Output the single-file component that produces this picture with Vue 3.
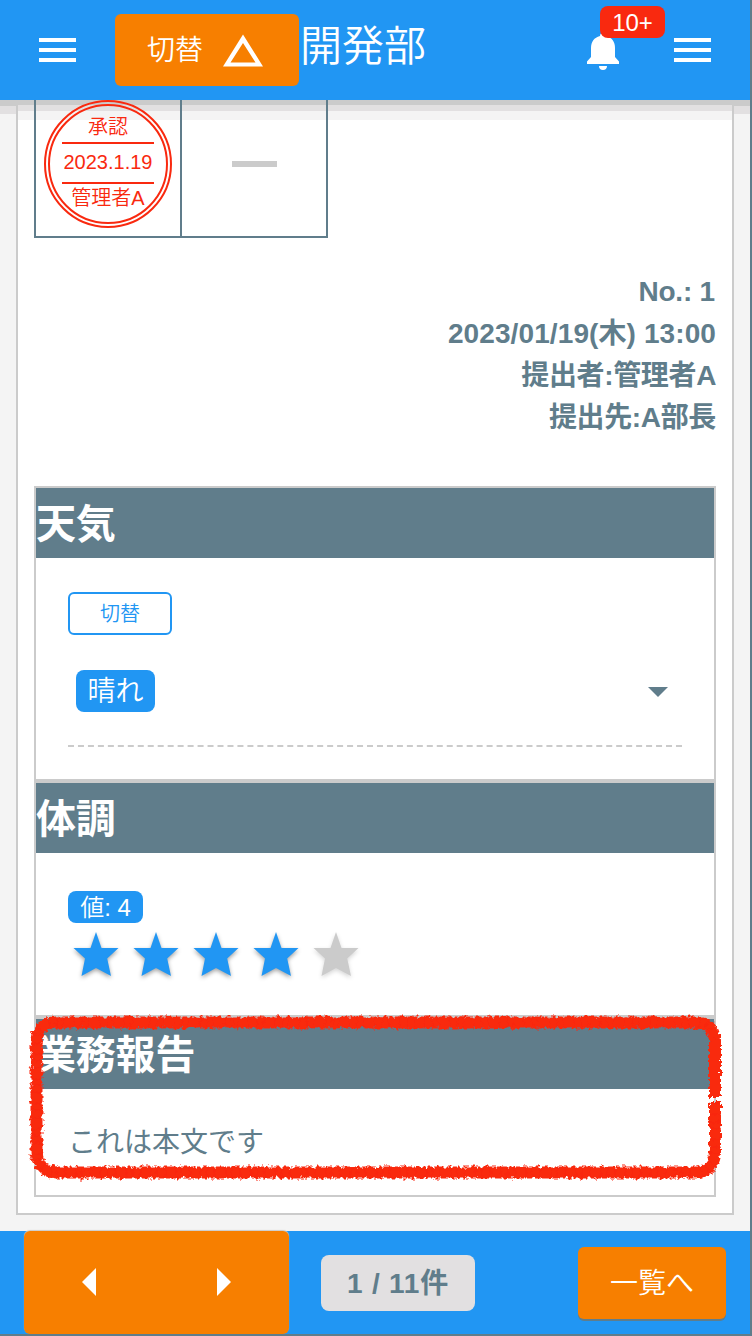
<script setup>
const lines = [
  { text: 'No.: 1', kind: 'number' },
  { text: '2023/01/19(木) 13:00', kind: 'date' },
  { text: '提出者:管理者A', kind: 'person' },
  { text: '提出先:A部長', kind: 'person' },
]
const stars = [true, true, true, true, false]
</script>

<template>
  <div class="page">
    <header class="topbar">
      <button class="menu"><i></i><i></i><i></i></button>
      <button class="switch">
        <span>切替</span>
        <svg width="40" height="33" viewBox="0 0 40 33"><path fill="#fff" fill-rule="evenodd" d="M20 0.500L40 32.500H0ZM20 9L7.500 28.500H32.500Z" /></svg>
      </button>
      <h1>開発部</h1>
      <div class="bell">
        <svg width="32" height="38" viewBox="0 0 32 38"><path fill="#fff" d="M16 0c-2 0-3 1-3 3C7 4.500 4 9 4 15v9L0 28.500V31h32v-2.500L28 24v-9C28 9 25 4.500 19 3c0-2-1-3-3-3ZM12 33h8c0 2.500-1.500 4-4 4s-4-1.500-4-4Z" /></svg>
        <span class="badge">10+</span>
      </div>
      <button class="menu"><i></i><i></i><i></i></button>
    </header>

    <main>
      <article class="card">
        <div class="approvals">
          <div class="cell">
            <div class="stamp">
              <div class="stamp-inner">
                <span class="state">承認</span>
                <span class="date">2023.1.19</span>
                <span class="who">管理者A</span>
              </div>
            </div>
          </div>
          <div class="cell"><b class="dash"></b></div>
        </div>

        <div class="meta">
          <p v-for="line in lines" :key="line.text" :class="line.kind">{{ line.text }}</p>
        </div>

        <section class="weather">
          <h2>天気</h2>
          <div class="content">
            <button class="outline">切替</button>
            <div class="select">
              <span class="chip">晴れ</span>
              <svg width="20" height="10" viewBox="0 0 20 10"><path d="M0 0H20L10 10Z" fill="#607d8b" /></svg>
            </div>
            <svg class="rule" width="614" height="2"><path d="M0 1H614" stroke="#cbcbcb" stroke-width="2" stroke-dasharray="6 3.967" /></svg>
          </div>
        </section>

        <section class="condition">
          <h2>体調</h2>
          <div class="content">
            <span class="value">値: 4</span>
            <div class="stars">
              <svg v-for="(on, i) in stars" :key="i" :class="{ on }" width="60" height="60" viewBox="0 0 60 60">
                <path d="M28 6L33.500 22H50.500L39.200 32.500L43 50L28 42L13.500 50L17 32.500L5.500 22H22.500Z" />
              </svg>
            </div>
          </div>
        </section>

        <section class="report">
          <h2>業務報告</h2>
          <div class="content"><p>これは本文です</p></div>
          <svg class="brush" width="716" height="190" viewBox="0 0 716 190">
            <defs>
              <filter id="chalk" x="0" y="0" width="716" height="190" filterUnits="userSpaceOnUse">
                <feTurbulence type="fractalNoise" baseFrequency="0.25" numOctaves="2" seed="8" result="noise" />
                <feDisplacementMap in="SourceGraphic" in2="noise" scale="7" xChannelSelector="R" yChannelSelector="G" />
              </filter>
            </defs>
            <g fill="none" stroke="#f9290f" filter="url(#chalk)">
              <path stroke-width="10" d="M699 98V43.500Q699 23.500 678 23.500H41.500Q20.500 23.500 20.500 43.500V151Q21 173.500 41.500 173.500H678Q699 173.500 699 152V103" />
              <path stroke-width="12" stroke-dasharray="7 1 10 1 5 1" d="M699 98V43.500Q699 23.500 678 23.500H41.500Q20.500 23.500 20.500 43.500V151Q21 173.500 41.500 173.500H678Q699 173.500 699 152V103" />
            </g>
          </svg>
        </section>
      </article>
    </main>

    <footer>
      <div class="pager">
        <button><svg width="14" height="28" viewBox="0 0 14 28"><path d="M14 0V28L0 14Z" fill="#fff" /></svg></button>
        <button><svg width="14" height="28" viewBox="0 0 14 28"><path d="M0 0L14 14L0 28Z" fill="#fff" /></svg></button>
      </div>
      <div class="count">1 / 11件</div>
      <button class="list">一覧へ</button>
    </footer>
  </div>
</template>

<style>
body { margin: 0; }
</style>

<style scoped>
* { box-sizing: border-box; }
.page {
  width: 752px; height: 1336px; overflow: hidden;
  display: flex; flex-direction: column;
  border-right: 2px solid #607d8b; border-bottom: 2px solid #607d8b;
  background: #f4f4f4; color: #607d8b;
  font-family: "Liberation Sans", "Noto Sans CJK JP", sans-serif;
  font-size: 28px;
}
button { border: 0; padding: 0; background: none; color: inherit; font: inherit; }
h1, h2, p { margin: 0; }
svg { display: block; }

.topbar { height: 100px; flex: none; display: flex; align-items: center; background: #2196f3; color: #fff; }
.menu { width: 37px; height: 24px; margin-left: 39px; display: flex; flex-direction: column; justify-content: space-between; }
.menu i { height: 4px; background: #fff; }
.switch {
  width: 184px; height: 72px; margin-left: 39px; padding: 0 36px 0 32px; border-radius: 6px;
  background: #f77f00; display: flex; align-items: center; justify-content: space-between;
  font-weight: 350;
}
.switch span { margin-top: -4px; }
h1 { width: 126px; margin: -7px 0 0 1px; font-size: 42px; line-height: 60px; font-weight: 350; white-space: nowrap; }
.bell { position: relative; width: 32px; height: 38px; margin-left: 161px; margin-top: 4px; }
.badge {
  position: absolute; left: 13px; top: -27px; width: 65px; height: 32px; border-radius: 8px;
  background: #f9290f; font-size: 24px; line-height: 34px; text-align: center;
}
.bell + .menu { margin-left: 55px; }

main {
  height: 1131px; flex: none; padding: 0 16px 16px;
  background: linear-gradient(#cbcbcb 0 6px, #e2e0e1 6px 14px, #f4f4f4 14px);
}
.card {
  height: 1115px; border: 2px solid #cbcbcb; border-top: 0; padding: 0 16px;
  background: linear-gradient(#cbcbcb 0 5px, #e2e0e1 5px 11px, #f4f4f4 11px 20px, #fff 20px);
}
.approvals { display: flex; width: 294px; height: 138px; border: 2px solid #607d8b; border-top: 0; }
.cell { flex: 1; display: flex; align-items: center; justify-content: center; }
.cell + .cell { border-left: 2px solid #607d8b; padding-bottom: 8px; }
.dash { width: 45px; height: 6px; background: #cbcbcb; }
.stamp { width: 128px; height: 128px; margin: -8px 0 0; padding: 2px; border: 2px solid #f9290f; border-radius: 50%; }
.stamp-inner {
  height: 100%; padding: 7px 12px 0; border: 2px solid #f9290f; border-radius: 50%;
  display: flex; flex-direction: column; align-items: center;
  color: #f9290f; font-size: 20px; line-height: 28px;
}
.stamp-inner span { white-space: nowrap; font-weight: 350; }
.stamp-inner .state { height: 30px; }
.stamp-inner .date { width: 92px; height: 42px; margin-top: -1px; border: solid #f9290f; border-width: 2px 0; line-height: 37px; display: flex; justify-content: center; }

.meta { margin: 33px 0 47px; text-align: right; font-weight: 700; line-height: 42px; }
.meta p { height: 42px; }
.meta .number { letter-spacing: -.2px; padding-right: 1px; }
.meta .date { letter-spacing: .1px; }
.meta .person { letter-spacing: -.35px; }

section { border: 2px solid #cbcbcb; background: #fff; }
h2 { height: 70px; background: #607d8b; color: #fff; font-size: 40px; line-height: 72px; font-weight: 700; letter-spacing: -.2px; }
.content { padding: 0 32px; }
.weather { height: 295px; }
.outline {
  display: block; width: 104px; height: 43px; margin-top: 34px; border: 2px solid #2196f3; border-radius: 6px;
  color: #2196f3; font-size: 20px; line-height: 40px; font-weight: 350;
}
.select { display: flex; align-items: center; justify-content: space-between; height: 42px; margin: 35px 14px 33px 8px; }
.select svg { margin-top: 2px; }
.chip { width: 79px; height: 42px; border-radius: 8px; background: #2196f3; color: #fff; line-height: 43px; text-align: center; font-weight: 350; }
.condition { height: 236px; }
.value { display: block; width: 75px; height: 32px; margin-top: 38px; border-radius: 8px; background: #2196f3; color: #fff; font-size: 24px; line-height: 34px; text-align: center; font-weight: 350; }
.stars { display: flex; margin-top: 3px; }
.stars svg { fill: #cbcbcb; filter: drop-shadow(0 2px 2px rgba(0, 0, 0, .16)); }
.stars svg.on { fill: #2196f3; filter: drop-shadow(0 2px 2px rgba(0, 0, 0, .36)); }
.report { position: relative; height: 180px; }
.report p { margin-top: 33px; line-height: 42px; }
.brush { position: absolute; left: -20px; top: -20px; }

footer { height: 103px; flex: none; display: flex; align-items: center; padding: 0 24px; background: #2196f3; }
.pager { width: 265px; height: 103px; display: flex; align-items: center; justify-content: space-between; padding: 0 58px 1px; border-radius: 6px; background: #f77f00; box-shadow: 0 -1px 1px #cbcbcb; }
.count { width: 154px; height: 56px; margin-left: 32px; border-radius: 8px; background: #e2e0e1; font-weight: 700; letter-spacing: .8px; line-height: 57px; text-align: center; }
.list { width: 148px; height: 72px; margin-left: auto; border-radius: 6px; background: #f77f00; color: #fff; font-weight: 350; box-shadow: 0 2px 0 #607d8b; line-height: 73px; }
</style>
